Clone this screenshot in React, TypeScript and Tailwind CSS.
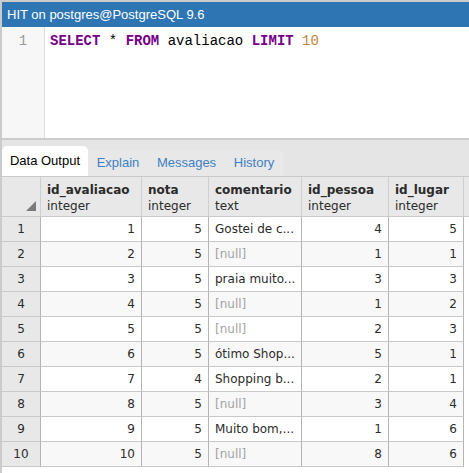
import React from "react";

type Row = {
  id: number;
  nota: number;
  comentario: string | null;
  pessoa: number;
  lugar: number;
};

const rows: Row[] = [
  { id: 1, nota: 5, comentario: "Gostei de c...", pessoa: 4, lugar: 5 },
  { id: 2, nota: 5, comentario: null, pessoa: 1, lugar: 1 },
  { id: 3, nota: 5, comentario: "praia muito...", pessoa: 3, lugar: 3 },
  { id: 4, nota: 5, comentario: null, pessoa: 1, lugar: 2 },
  { id: 5, nota: 5, comentario: null, pessoa: 2, lugar: 3 },
  { id: 6, nota: 5, comentario: "ótimo Shop...", pessoa: 5, lugar: 1 },
  { id: 7, nota: 4, comentario: "Shopping b...", pessoa: 2, lugar: 1 },
  { id: 8, nota: 5, comentario: null, pessoa: 3, lugar: 4 },
  { id: 9, nota: 5, comentario: "Muito bom,...", pessoa: 1, lugar: 6 },
  { id: 10, nota: 5, comentario: null, pessoa: 8, lugar: 6 },
];

const columns = [
  { name: "id_avaliacao", type: "integer" },
  { name: "nota", type: "integer" },
  { name: "comentario", type: "text" },
  { name: "id_pessoa", type: "integer" },
  { name: "id_lugar", type: "integer" },
];

const gridCols = "grid w-[462px] grid-cols-[39px_101px_67px_93px_87px_75px]";

// célula numérica alinhada à direita
function NumCell({ value }: { value: number }) {
  return (
    <div className="flex h-[25px] items-center justify-end border-b border-r border-b-[#c9c9c9] border-r-[#b5b5b5] border-r-dotted pr-[6px]">
      {value}
    </div>
  );
}

export default function App() {
  return (
    <div className="flex h-[473px] w-[469px] flex-col overflow-hidden border-l-2 border-t-2 border-[#cbcbcb] bg-white">
      {/* barra de título */}
      <div className="flex h-[25px] shrink-0 items-center bg-[#2e75b4] pl-[5px] font-['Liberation_Sans',sans-serif] text-[13px] text-white">
        HIT on postgres@PostgreSQL 9.6
      </div>

      {/* editor SQL */}
      <div className="flex h-[113px] shrink-0 border-b-2 border-[#cccccc] font-['Liberation_Mono',monospace] text-[14px] leading-[18px]">
        <div className="w-[43px] shrink-0 border-r border-[#dddddd] bg-[#f7f7f7] pt-[5px] text-center text-[#999999]">
          1
        </div>
        <div className="pl-[5px] pt-[5px] text-black">
          <span className="font-bold text-[#770088]">SELECT</span> *{" "}
          <span className="font-bold text-[#770088]">FROM</span> avaliacao{" "}
          <span className="font-bold text-[#770088]">LIMIT</span>{" "}
          <span className="text-[#c0843a]">10</span>
        </div>
      </div>

      {/* abas */}
      <div className="flex h-[36px] shrink-0 items-end bg-[#e5e5e5] font-['Liberation_Sans',sans-serif] text-[13px]">
        <div className="flex h-[30px] w-[86px] items-center justify-center rounded-t-[5px] bg-white text-black">
          Data Output
        </div>
        <div className="flex h-[26px] w-[60px] items-center justify-center rounded-t-[3px] bg-[#e8e8e8] text-[#3f80c3]">
          Explain
        </div>
        <div className="flex h-[26px] w-[77px] items-center justify-center rounded-t-[3px] bg-[#e8e8e8] text-[#3f80c3]">
          Messages
        </div>
        <div className="flex h-[26px] w-[58px] items-center justify-center rounded-t-[3px] bg-[#e8e8e8] text-[#3f80c3]">
          History
        </div>
      </div>

      {/* grade de resultados */}
      <div className="flex-1 font-['DejaVu_Sans',sans-serif] text-[12px] text-[#2b2b2b]">
        <div className="flex border-y border-[#c9c9c9] bg-[#e8e8e8]">
          <div className={gridCols}>
            <div className="relative h-[39px] border-r border-[#cfcfcf]">
              <svg
                className="absolute bottom-[5px] right-[4px]"
                width="10"
                height="10"
                viewBox="0 0 10 10"
              >
                <polygon points="10,0 10,10 0,10" fill="#7a7a7a" />
              </svg>
            </div>
            {columns.map((c) => (
              <div
                key={c.name}
                className="flex h-[39px] flex-col border-r border-[#cfcfcf] pl-[6px] pt-[5px] leading-[16px]"
              >
                <span className="font-bold">{c.name}</span>
                <span>{c.type}</span>
              </div>
            ))}
          </div>
        </div>

        {rows.map((r, i) => (
          <div
            key={r.id}
            className={`${gridCols} ${i % 2 === 1 ? "bg-[#f8f8f8]" : "bg-white"}`}
          >
            <div className="flex h-[25px] items-center justify-center border-b border-r border-b-[#c9c9c9] border-r-[#b5b5b5] border-r-dotted bg-[#e8e8e8]">
              {r.id}
            </div>
            <NumCell value={r.id} />
            <NumCell value={r.nota} />
            <div className="flex h-[25px] items-center overflow-hidden whitespace-nowrap border-b border-r border-b-[#c9c9c9] border-r-[#b5b5b5] border-r-dotted pl-[6px]">
              {r.comentario === null ? (
                <span className="text-[#a3a3a3]">[null]</span>
              ) : (
                r.comentario
              )}
            </div>
            <NumCell value={r.pessoa} />
            <NumCell value={r.lugar} />
          </div>
        ))}
      </div>
    </div>
  );
}
